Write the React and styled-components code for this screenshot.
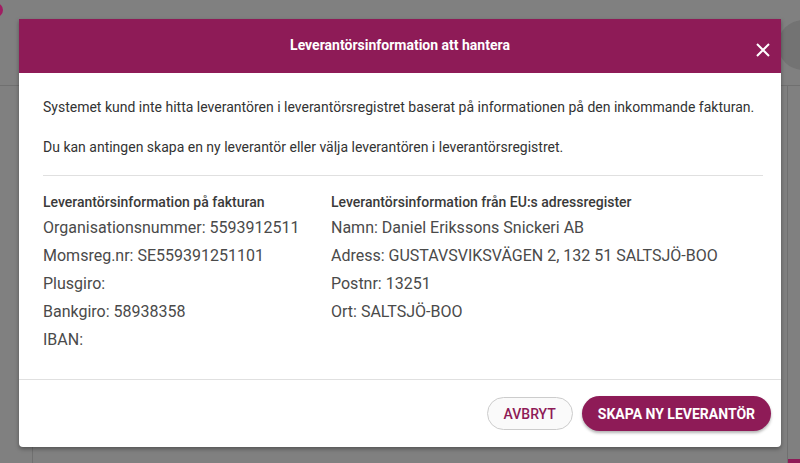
import React from "react";
import styled, { createGlobalStyle } from "styled-components";

const GlobalStyle = createGlobalStyle`
    html, body {
        margin: 0;
        padding: 0;
        width: 800px;
        height: 463px;
        overflow: hidden;
        font-family: Roboto, "Liberation Sans", sans-serif;
    }
`;

const colors = {
    brand: "#8e1b57",
    text: "#333333",
    muted: "#4a4a4a",
    divider: "#e0e0e0",
    dim: "#808080",
    dimLine: "#707070",
};

// dimmed page behind the modal
const Page = styled.div`
    position: relative;
    width: 800px;
    height: 463px;
    background-color: ${colors.dim};
    display: flex;
    flex-direction: column;
`;

const TopBar = styled.div`
    height: 85px;
    border-bottom: 1px solid ${colors.dimLine};
    display: flex;
    align-items: flex-start;
    justify-content: space-between;
`;

const Logo = styled.div`
    width: 14px;
    height: 14px;
    margin: 3px 0 0 -11px;
    border-radius: 50%;
    background-color: #a01d62;
`;

const Avatar = styled.div`
    width: 50px;
    height: 50px;
    margin: 20px -28px 0 0;
    border-radius: 50%;
    background-color: #737373;
`;

const PageBody = styled.div`
    flex: 1;
    display: flex;
`;

const SideBar = styled.div`
    width: 32px;
    border-right: 1px solid ${colors.dimLine};
`;

const Content = styled.div`
    flex: 1;
    display: flex;
    justify-content: flex-end;
    align-items: flex-end;
`;

const Panel = styled.div`
    width: 12px;
    height: 100%;
    border-left: 1px solid ${colors.dimLine};
    display: flex;
    align-items: flex-end;
`;

const PinkBar = styled.div`
    width: 100%;
    height: 4px;
    background-color: ${colors.brand};
`;

const Dialog = styled.div`
    position: absolute;
    top: 19px;
    left: 19px;
    width: 762px;
    background-color: #fff;
    border-radius: 0 0 4px 4px;
    box-shadow: 0 2px 4px rgba(0, 0, 0, 0.35);
    display: flex;
    flex-direction: column;
`;

const Header = styled.div`
    height: 54px;
    background-color: ${colors.brand};
    display: flex;
    align-items: center;
    justify-content: center;
    position: relative;
`;

const Title = styled.div`
    color: #fff;
    font-size: 14px;
    font-weight: 700;
    margin-top: -2px;
`;

const CloseButton = styled.button`
    position: absolute;
    right: 8px;
    top: 21px;
    width: 20px;
    height: 20px;
    padding: 0;
    border: none;
    background: none;
    display: flex;
    align-items: center;
    justify-content: center;
    cursor: pointer;
`;

const Body = styled.div`
    padding: 24px 18px 25px 24px;
    display: flex;
    flex-direction: column;
`;

const Paragraph = styled.p`
    margin: 0 0 20px 0;
    font-size: 14px;
    line-height: 20px;
    white-space: nowrap;
    color: ${colors.text};
`;

const Divider = styled.div`
    height: 1px;
    background-color: ${colors.divider};
    margin: -2px 0 16px 0;
`;

const Columns = styled.div`
    display: grid;
    grid-template-columns: 288px 1fr;
`;

const Column = styled.div`
    display: flex;
    flex-direction: column;
`;

const ColumnTitle = styled.div`
    font-size: 14px;
    font-weight: 500;
    line-height: 20px;
    color: #3a3a3a;
    margin-bottom: 2px;
`;

const Item = styled.div`
    font-size: 16px;
    line-height: 28px;
    color: ${colors.muted};
`;

const Footer = styled.div`
    border-top: 1px solid ${colors.divider};
    padding: 16px 10px 16px 0;
    display: flex;
    justify-content: flex-end;
    gap: 9px;
`;

const Button = styled.button`
    height: ${props => props.primary ? "35px" : "33px"};
    margin-top: ${props => props.primary ? "0" : "1px"};
    padding: 0 16px;
    border-radius: 18px;
    border: ${props => props.primary ? "none" : "1px solid #cccccc"};
    background-color: ${props => props.primary ? colors.brand : "#fafafa"};
    color: ${props => props.primary ? "#fff" : colors.brand};
    box-shadow: ${props => props.primary ? "0 2px 3px rgba(0,0,0,0.3)" : "none"};
    font-family: Roboto, "Liberation Sans", sans-serif;
    font-size: 14px;
    font-weight: ${props => props.primary ? 700 : 500};
    text-transform: uppercase;
    cursor: pointer;
`;

const invoiceInfo = [
    "Organisationsnummer: 5593912511",
    "Momsreg.nr: SE559391251101",
    "Plusgiro:",
    "Bankgiro: 58938358",
    "IBAN:",
];

const registryInfo = [
    "Namn: Daniel Erikssons Snickeri AB",
    "Adress: GUSTAVSVIKSVÄGEN 2, 132 51 SALTSJÖ-BOO",
    "Postnr: 13251",
    "Ort: SALTSJÖ-BOO",
];

const CloseIcon = () => (
    <svg width="14" height="14" viewBox="0 0 14 14">
        <path d="M1 1 L13 13 M13 1 L1 13" stroke="#fff" strokeWidth="2" />
    </svg>
);

const App = () => {
    return (
        <>
            <GlobalStyle />
            <Page>
                <TopBar>
                    <Logo />
                    <Avatar />
                </TopBar>
                <PageBody>
                    <SideBar />
                    <Content>
                        <Panel>
                            <PinkBar />
                        </Panel>
                    </Content>
                </PageBody>

                <Dialog>
                    <Header>
                        <Title>Leverantörsinformation att hantera</Title>
                        <CloseButton aria-label="Stäng">
                            <CloseIcon />
                        </CloseButton>
                    </Header>
                    <Body>
                        <Paragraph>
                            Systemet kund inte hitta leverantören i leverantörsregistret baserat på informationen på den inkommande fakturan.
                        </Paragraph>
                        <Paragraph>
                            Du kan antingen skapa en ny leverantör eller välja leverantören i leverantörsregistret.
                        </Paragraph>
                        <Divider />
                        <Columns>
                            <Column>
                                <ColumnTitle>Leverantörsinformation på fakturan</ColumnTitle>
                                {invoiceInfo.map(row => <Item key={row}>{row}</Item>)}
                            </Column>
                            <Column>
                                <ColumnTitle>Leverantörsinformation från EU:s adressregister</ColumnTitle>
                                {registryInfo.map(row => <Item key={row}>{row}</Item>)}
                            </Column>
                        </Columns>
                    </Body>
                    <Footer>
                        <Button>Avbryt</Button>
                        <Button primary>Skapa ny leverantör</Button>
                    </Footer>
                </Dialog>
            </Page>
        </>
    );
};

export default App;
